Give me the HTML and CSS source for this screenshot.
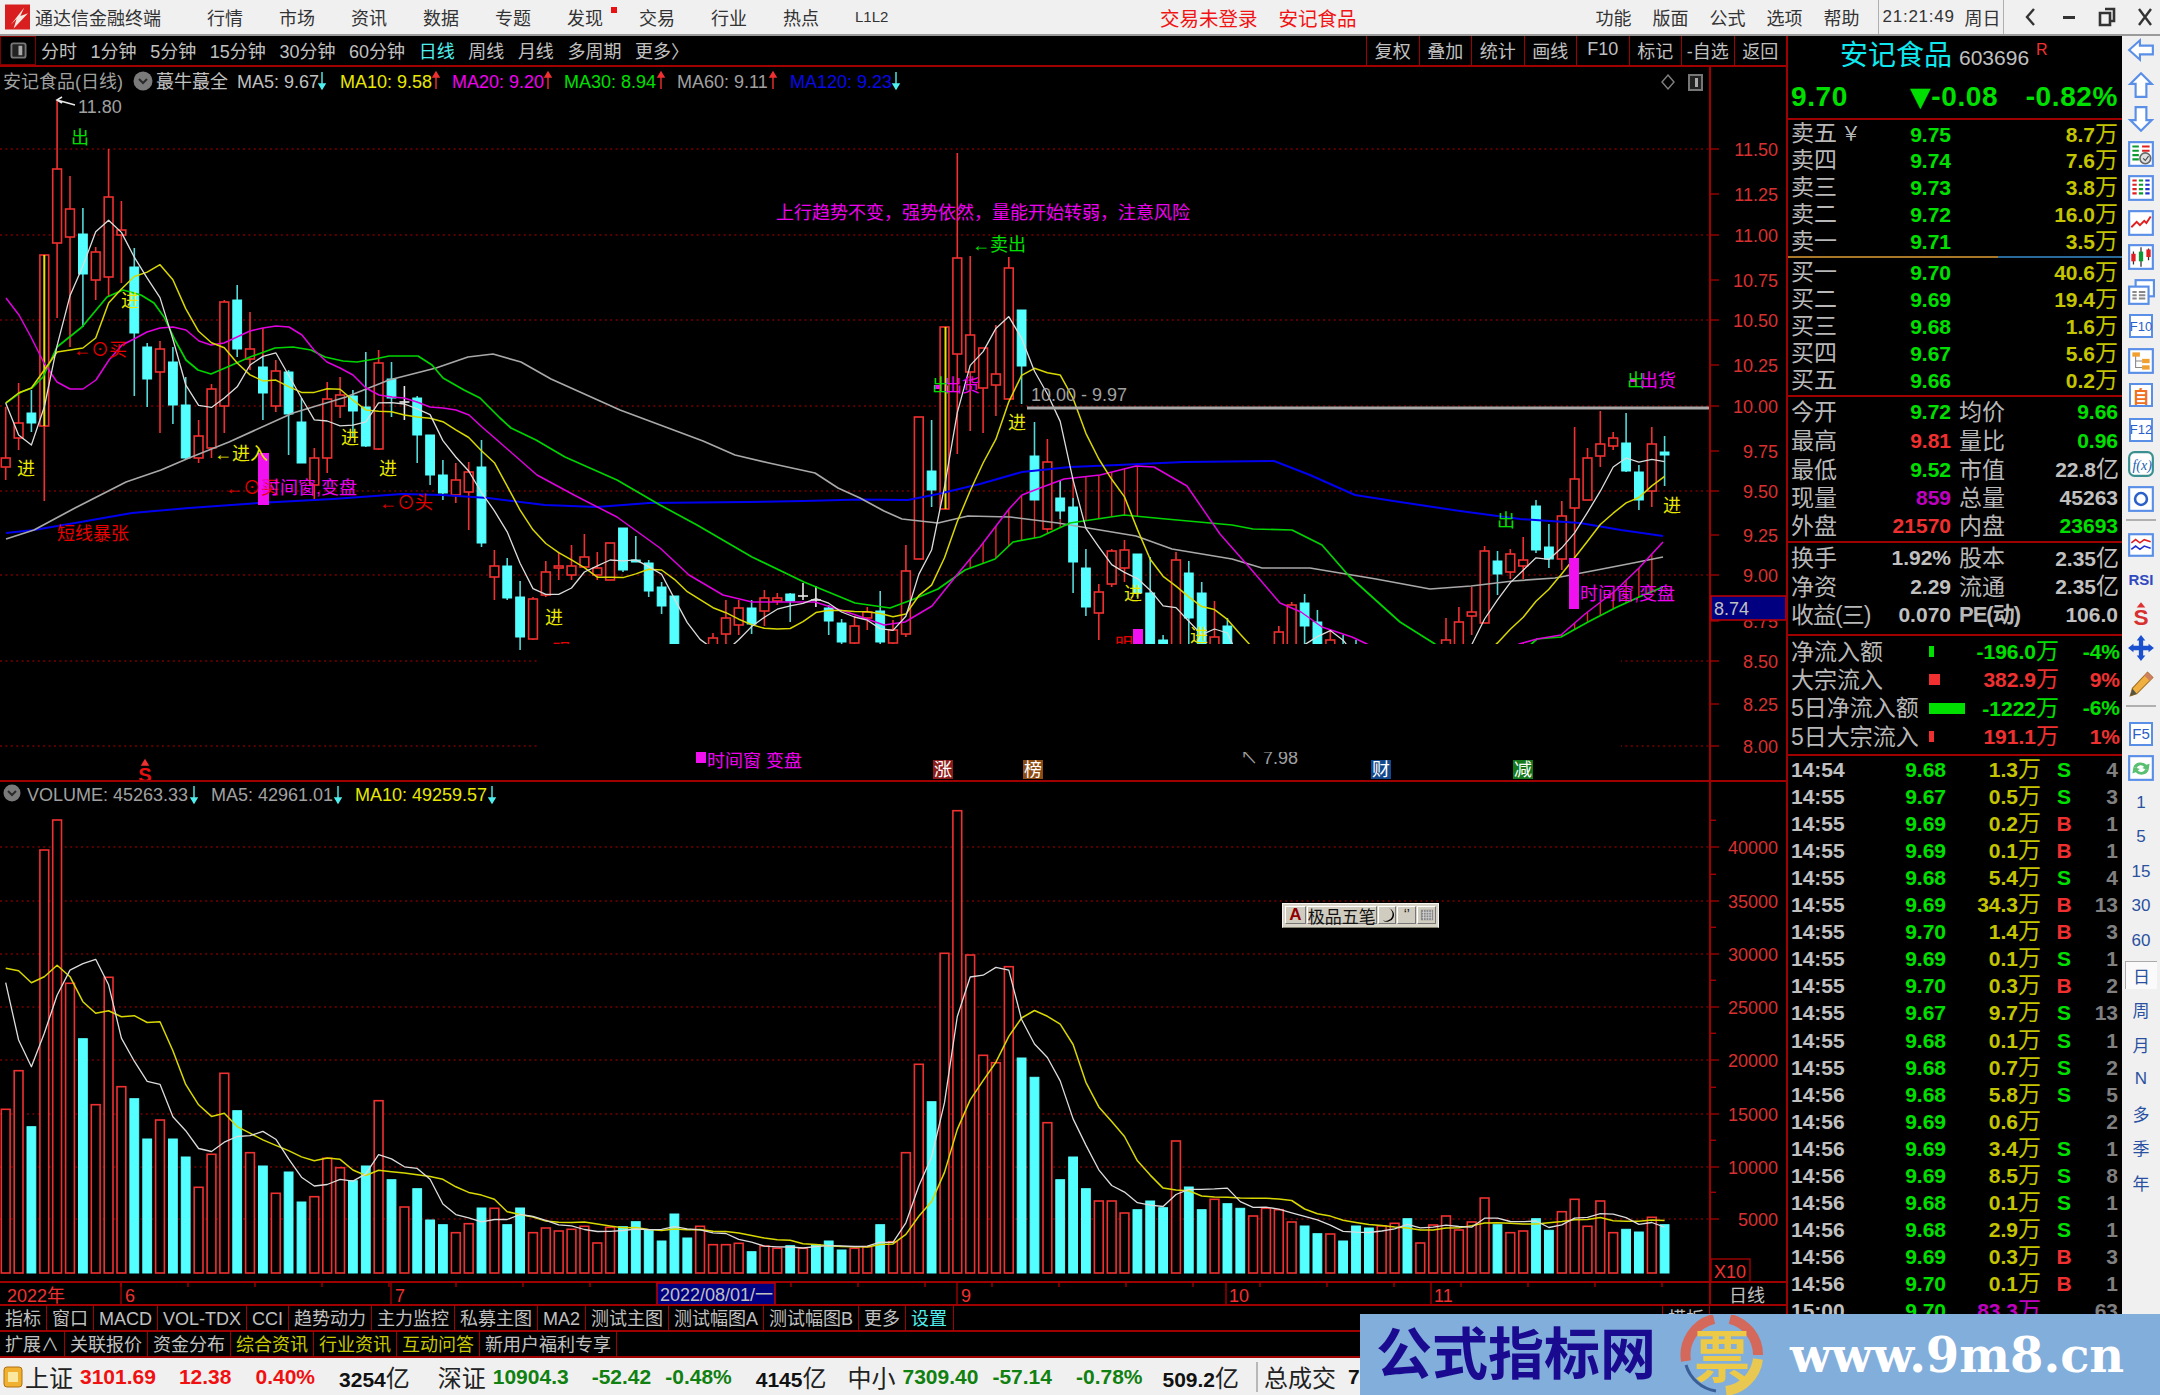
FILE: index.html
```html
<!DOCTYPE html>
<html lang="zh-CN">
<head>
<meta charset="utf-8">
<title>通达信金融终端</title>
<link rel="stylesheet" href="styles.css">
</head>
<body>
<div class="app">
  <header class="titlebar">
    <svg class="logo" viewBox="0 0 26 26"><rect width="26" height="26" fill="#d81e1e"/><path d="M6 21 L20 3 L16 12 L24 9 L9 25 L12 15 Z" fill="#f4e8e0"/></svg>
    <span class="brand">通达信金融终端</span>
    <nav class="mainmenu">
      <span>行情</span><span>市场</span><span>资讯</span><span>数据</span><span>专题</span><span class="flagged">发现</span><span>交易</span><span>行业</span><span>热点</span><span class="l1l2">L1L2</span>
    </nav>
    <div class="notice"><span>交易未登录</span><span>安记食品</span></div>
    <nav class="submenu"><span>功能</span><span>版面</span><span>公式</span><span>选项</span><span>帮助</span></nav>
    <div class="clock"><span class="time">21:21:49</span><span class="day">周日</span></div>
    <div class="winctl">
      <svg viewBox="0 0 18 22"><path d="M12 3 L5 11 L12 19" fill="none" stroke="#333" stroke-width="2.4"/></svg>
      <svg viewBox="0 0 18 22"><rect x="3" y="10" width="12" height="3" fill="#333"/></svg>
      <svg viewBox="0 0 18 22"><path d="M7 3 H16 V15 H13 M2 7 H12 V19 H2 Z" fill="none" stroke="#333" stroke-width="2.6"/></svg>
      <svg viewBox="0 0 18 22"><path d="M3 3 L15 19 M15 3 L3 19" fill="none" stroke="#333" stroke-width="2.4"/></svg>
    </div>
  </header>

  <main class="workspace">
    <section class="market">
      <nav class="periodbar">
        <span class="panelbtn"><svg viewBox="0 0 18 18"><rect x="1.5" y="1.5" width="15" height="15" rx="2" fill="#222" stroke="#777" stroke-width="2"/><rect x="9" y="4" width="4" height="10" fill="#aaa"/></svg></span>
        <div class="periods">
          <span>分时</span><span>1分钟</span><span>5分钟</span><span>15分钟</span><span>30分钟</span><span>60分钟</span><span class="active">日线</span><span>周线</span><span>月线</span><span>多周期</span><span>更多〉</span>
        </div>
        <div class="tools"><span>复权</span><span>叠加</span><span>统计</span><span>画线</span><span>F10</span><span>标记</span><span>-自选</span><span>返回</span></div>
      </nav>
      <div class="chart" id="chart"></div>
      <div class="tabs tabs-first">
        <span>指标</span><span>窗口</span><span>MACD</span><span>VOL-TDX</span><span>CCI</span><span>趋势动力</span><span>主力监控</span><span>私募主图</span><span>MA2</span><span>测试主图</span><span>测试幅图A</span><span>测试幅图B</span><span>更多</span><span class="cyan">设置</span><span class="tab-end">模板</span><span class="tab-blank"></span>
      </div>
      <div class="tabs">
        <span>扩展∧</span><span>关联报价</span><span>资金分布</span><span class="olive">综合资讯</span><span class="olive">行业资讯</span><span class="olive">互动问答</span><span>新用户福利专享</span>
      </div>
    </section>

    <aside class="quote">
      <div class="quote-head">
        <div class="stock"><span class="stock-name">安记食品</span><span class="stock-code">603696</span><sup class="stock-flag">R</sup></div>
        <div class="stock-price"><span>9.70</span><span class="stock-change"><i>▼</i>-0.08</span><span class="stock-pct">-0.82%</span></div>
      </div>
      <div class="book">
        <div class="brow"><span class="lb">卖五<em>￥</em></span><span class="gr">9.75</span><span class="yl">8.7<b>万</b></span></div>
        <div class="brow"><span class="lb">卖四</span><span class="gr">9.74</span><span class="yl">7.6<b>万</b></span></div>
        <div class="brow"><span class="lb">卖三</span><span class="gr">9.73</span><span class="yl">3.8<b>万</b></span></div>
        <div class="brow"><span class="lb">卖二</span><span class="gr">9.72</span><span class="yl">16.0<b>万</b></span></div>
        <div class="brow"><span class="lb">卖一</span><span class="gr">9.71</span><span class="yl">3.5<b>万</b></span></div>
      </div>
      <div class="split"><i></i><i></i></div>
      <div class="book book-buy">
        <div class="brow"><span class="lb">买一</span><span class="gr">9.70</span><span class="yl">40.6<b>万</b></span></div>
        <div class="brow"><span class="lb">买二</span><span class="gr">9.69</span><span class="yl">19.4<b>万</b></span></div>
        <div class="brow"><span class="lb">买三</span><span class="gr">9.68</span><span class="yl">1.6<b>万</b></span></div>
        <div class="brow"><span class="lb">买四</span><span class="gr">9.67</span><span class="yl">5.6<b>万</b></span></div>
        <div class="brow"><span class="lb">买五</span><span class="gr">9.66</span><span class="yl">0.2<b>万</b></span></div>
      </div>
      <div class="info">
        <div class="irow"><span class="lb">今开</span><span class="gr">9.72</span><span class="lb">均价</span><span class="gr">9.66</span></div>
        <div class="irow"><span class="lb">最高</span><span class="rd">9.81</span><span class="lb">量比</span><span class="gr">0.96</span></div>
        <div class="irow"><span class="lb">最低</span><span class="gr">9.52</span><span class="lb">市值</span><span class="gy">22.8<b>亿</b></span></div>
        <div class="irow"><span class="lb">现量</span><span class="mg">859</span><span class="lb">总量</span><span class="gy">45263</span></div>
        <div class="irow"><span class="lb">外盘</span><span class="rd">21570</span><span class="lb">内盘</span><span class="gr">23693</span></div>
      </div>
      <div class="info info-fund">
        <div class="irow"><span class="lb">换手</span><span class="gy">1.92%</span><span class="lb">股本</span><span class="gy">2.35<b>亿</b></span></div>
        <div class="irow"><span class="lb">净资</span><span class="gy">2.29</span><span class="lb">流通</span><span class="gy">2.35<b>亿</b></span></div>
        <div class="irow"><span class="lb nowrap">收益(三)</span><span class="gy">0.070</span><span class="lb nowrap pe">PE(动)</span><span class="gy">106.0</span></div>
      </div>
      <div class="flow">
        <div class="frow"><span class="lb">净流入额</span><span class="fbar"><i class="bar-g bar-1"></i></span><span class="gr">-196.0<b>万</b></span><span class="gr">-4%</span></div>
        <div class="frow"><span class="lb">大宗流入</span><span class="fbar"><i class="bar-r bar-2"></i></span><span class="rd">382.9<b>万</b></span><span class="rd">9%</span></div>
        <div class="frow"><span class="lb">5日净流入额</span><span class="fbar"><i class="bar-g bar-3"></i></span><span class="gr">-1222<b>万</b></span><span class="gr">-6%</span></div>
        <div class="frow"><span class="lb">5日大宗流入</span><span class="fbar"><i class="bar-r bar-1"></i></span><span class="rd">191.1<b>万</b></span><span class="rd">1%</span></div>
      </div>
      <div class="trades">
        <div class="trow"><span class="gy">14:54</span><span class="gr">9.68</span><span class="yl">1.3<b>万</b></span><span class="gr">S</span><span class="dim">4</span></div>
        <div class="trow"><span class="gy">14:55</span><span class="gr">9.67</span><span class="yl">0.5<b>万</b></span><span class="gr">S</span><span class="dim">3</span></div>
        <div class="trow"><span class="gy">14:55</span><span class="gr">9.69</span><span class="yl">0.2<b>万</b></span><span class="rd">B</span><span class="dim">1</span></div>
        <div class="trow"><span class="gy">14:55</span><span class="gr">9.69</span><span class="yl">0.1<b>万</b></span><span class="rd">B</span><span class="dim">1</span></div>
        <div class="trow"><span class="gy">14:55</span><span class="gr">9.68</span><span class="yl">5.4<b>万</b></span><span class="gr">S</span><span class="dim">4</span></div>
        <div class="trow"><span class="gy">14:55</span><span class="gr">9.69</span><span class="yl">34.3<b>万</b></span><span class="rd">B</span><span class="dim">13</span></div>
        <div class="trow"><span class="gy">14:55</span><span class="gr">9.70</span><span class="yl">1.4<b>万</b></span><span class="rd">B</span><span class="dim">3</span></div>
        <div class="trow"><span class="gy">14:55</span><span class="gr">9.69</span><span class="yl">0.1<b>万</b></span><span class="gr">S</span><span class="dim">1</span></div>
        <div class="trow"><span class="gy">14:55</span><span class="gr">9.70</span><span class="yl">0.3<b>万</b></span><span class="rd">B</span><span class="dim">2</span></div>
        <div class="trow"><span class="gy">14:55</span><span class="gr">9.67</span><span class="yl">9.7<b>万</b></span><span class="gr">S</span><span class="dim">13</span></div>
        <div class="trow"><span class="gy">14:55</span><span class="gr">9.68</span><span class="yl">0.1<b>万</b></span><span class="gr">S</span><span class="dim">1</span></div>
        <div class="trow"><span class="gy">14:55</span><span class="gr">9.68</span><span class="yl">0.7<b>万</b></span><span class="gr">S</span><span class="dim">2</span></div>
        <div class="trow"><span class="gy">14:56</span><span class="gr">9.68</span><span class="yl">5.8<b>万</b></span><span class="gr">S</span><span class="dim">5</span></div>
        <div class="trow"><span class="gy">14:56</span><span class="gr">9.69</span><span class="yl">0.6<b>万</b></span><span></span><span class="dim">2</span></div>
        <div class="trow"><span class="gy">14:56</span><span class="gr">9.69</span><span class="yl">3.4<b>万</b></span><span class="gr">S</span><span class="dim">1</span></div>
        <div class="trow"><span class="gy">14:56</span><span class="gr">9.69</span><span class="yl">8.5<b>万</b></span><span class="gr">S</span><span class="dim">8</span></div>
        <div class="trow"><span class="gy">14:56</span><span class="gr">9.68</span><span class="yl">0.1<b>万</b></span><span class="gr">S</span><span class="dim">1</span></div>
        <div class="trow"><span class="gy">14:56</span><span class="gr">9.68</span><span class="yl">2.9<b>万</b></span><span class="gr">S</span><span class="dim">1</span></div>
        <div class="trow"><span class="gy">14:56</span><span class="gr">9.69</span><span class="yl">0.3<b>万</b></span><span class="rd">B</span><span class="dim">3</span></div>
        <div class="trow"><span class="gy">14:56</span><span class="gr">9.70</span><span class="yl">0.1<b>万</b></span><span class="rd">B</span><span class="dim">1</span></div>
        <div class="trow"><span class="gy">15:00</span><span class="gr">9.70</span><span class="mg">83.3<b>万</b></span><span></span><span class="dim">63</span></div>
      </div>
    </aside>

    <aside class="sidebar">
      <svg class="ic" viewBox="0 0 26 26"><path d="M2 13 L12 4 V9 H24 V17 H12 V22Z" fill="#fff" stroke="#5a8fe8" stroke-width="2"/></svg>
      <svg class="ic" viewBox="0 0 26 26"><path d="M13 2 L23 12 H18 V24 H8 V12 H3Z" fill="#fff" stroke="#5a8fe8" stroke-width="2"/></svg>
      <svg class="ic" viewBox="0 0 26 26"><path d="M13 24 L23 14 H18 V2 H8 V14 H3Z" fill="#fff" stroke="#5a8fe8" stroke-width="2"/></svg>
      <svg class="ic" viewBox="0 0 26 26"><rect x="2" y="2" width="22" height="22" fill="#fff" stroke="#5a8fe8" stroke-width="2"/><path d="M5 6H11M5 10H11M5 14H11M5 18H11" stroke="#0a9a30" stroke-width="2"/><path d="M14 6H21M14 10H21" stroke="#e02020" stroke-width="2"/><circle cx="17" cy="17" r="5" fill="#ddd" stroke="#666" stroke-width="1.5"/><path d="M15 17l2 2 3-4" fill="none" stroke="#444"/></svg>
      <svg class="ic" viewBox="0 0 26 26"><rect x="2" y="2" width="22" height="22" fill="#fff" stroke="#5a8fe8" stroke-width="2"/><path d="M5 6H9M5 10H9M5 14H9M5 18H9" stroke="#e02020" stroke-width="2"/><path d="M11 6H15M11 10H15M11 14H15M11 18H15" stroke="#0a9a30" stroke-width="2"/><path d="M17 6H21M17 10H21M17 14H21M17 18H21" stroke="#2030d0" stroke-width="2"/></svg>
      <svg class="ic" viewBox="0 0 26 26"><rect x="2" y="2" width="22" height="22" fill="#fff" stroke="#5a8fe8" stroke-width="2"/><path d="M4 17 L9 12 L12 15 L16 11 L18 13 L22 7" fill="none" stroke="#e02020" stroke-width="1.8"/></svg>
      <svg class="ic" viewBox="0 0 26 26"><rect x="2" y="2" width="22" height="22" fill="#fff" stroke="#5a8fe8" stroke-width="2"/><path d="M6 8V20M13 4V22M20 5V16" stroke="#333" stroke-width="1.2"/><rect x="4" y="10" width="4" height="7" fill="#e02020"/><rect x="11" y="8" width="4" height="9" fill="#0a9a30"/><rect x="18" y="6" width="4" height="7" fill="#e02020"/></svg>
      <svg class="ic" viewBox="0 0 26 26"><rect x="8" y="2" width="17" height="15" fill="#fff" stroke="#5a8fe8" stroke-width="2"/><rect x="2" y="8" width="18" height="16" fill="#fff" stroke="#5a8fe8" stroke-width="2"/><path d="M5 13H9M11 13H17M5 16H9M11 16H17M5 19H9M11 19H17" stroke="#888" stroke-width="1.8"/></svg>
      <span class="ic boxed">F10</span>
      <svg class="ic" viewBox="0 0 26 26"><rect x="2" y="2" width="22" height="22" fill="#fff" stroke="#5a8fe8" stroke-width="2"/><path d="M8 8V19H14M8 13H14" fill="none" stroke="#888"/><rect x="5" y="5" width="7" height="4" fill="#f0a030"/><rect x="14" y="11" width="7" height="4" fill="#f0a030"/><rect x="14" y="17" width="7" height="4" fill="#f0a030"/></svg>
      <span class="ic boxed orange">自</span>
      <span class="ic boxed">F12</span>
      <svg class="ic" viewBox="0 0 26 26"><rect x="2" y="2" width="22" height="22" rx="5" fill="#fff" stroke="#3a9090" stroke-width="2"/><text x="5" y="19" class="ic-fx">f(x)</text></svg>
      <svg class="ic" viewBox="0 0 26 26"><rect x="2" y="2" width="22" height="22" fill="#fff" stroke="#5a8fe8" stroke-width="2"/><circle cx="13" cy="13" r="5.5" fill="none" stroke="#2a60c8" stroke-width="2.4"/></svg>
      <i class="sep sep-a"></i>
      <svg class="ic after-sep" viewBox="0 0 26 26"><rect x="2" y="3" width="22" height="20" fill="#fff" stroke="#5a8fe8" stroke-width="2"/><path d="M4 11 l4-3 4 3 4-3 6 2" fill="none" stroke="#e02020" stroke-width="1.5"/><path d="M4 17 l4-3 4 3 4-3 6 2" fill="none" stroke="#2030d0" stroke-width="1.5"/></svg>
      <span class="ic rsi">RSI</span>
      <svg class="ic" viewBox="0 0 26 26"><path d="M13 2 L17 7 H9Z" fill="#e03030"/><text x="6" y="23" class="ic-s">S</text></svg>
      <svg class="ic" viewBox="0 0 26 26"><path d="M13 1 L17 6 H15 V11 H20 V9 L25 13 L20 17 V15 H15 V20 H17 L13 25 L9 20 H11 V15 H6 V17 L1 13 L6 9 V11 H11 V6 H9Z" fill="#1a50d0"/></svg>
      <svg class="ic" viewBox="0 0 26 26"><path d="M19 3 L24 8 L9 23 L3 25 L5 18Z" fill="#f0b040" stroke="#a07020"/><path d="M19 3 L24 8 L21 11 L16 6Z" fill="#d08060"/><path d="M3 25 L5 18 L9 23Z" fill="#554"/></svg>
      <i class="sep sep-b"></i>
      <span class="ic boxed big after-sep-b">F5</span>
      <svg class="ic" viewBox="0 0 26 26"><rect x="2" y="2" width="22" height="22" fill="#fff" stroke="#5a8fe8" stroke-width="2"/><path d="M6 12 a7 6 0 0 1 12-2 l3-1 -1 6 -6-2 2-1 a4 4 0 0 0-7 1Z" fill="#58c070"/><path d="M20 15 a7 6 0 0 1-12 2 l-3 1 1-6 6 2 -2 1 a4 4 0 0 0 7-1Z" fill="#58c070"/></svg>
      <span class="ic num">1</span><span class="ic num">5</span><span class="ic num">15</span><span class="ic num">30</span><span class="ic num">60</span>
      <span class="ic num current">日</span><span class="ic num">周</span><span class="ic num">月</span><span class="ic num">N</span><span class="ic num">多</span><span class="ic num">季</span><span class="ic num">年</span>
    </aside>
  </main>

  <footer class="statusbar">
    <svg class="status-icon" viewBox="0 0 20 22"><rect x="1" y="1" width="18" height="20" rx="3" fill="#f0b030" stroke="#b07010"/><rect x="5" y="6" width="10" height="10" fill="#fbe8a0"/></svg>
    <div class="index"><span class="nm">上证</span><span class="up">3101.69</span><span class="up w2">12.38</span><span class="up">0.40%</span><span class="amt">3254<b>亿</b></span></div>
    <div class="index index-sz"><span class="nm">深证</span><span class="dn">10904.3</span><span class="dn w2">-52.42</span><span class="dn tight">-0.48%</span><span class="amt">4145<b>亿</b></span></div>
    <div class="index index-zx"><span class="nm">中小</span><span class="dn">7309.40</span><span class="dn tight">-57.14</span><span class="dn">-0.78%</span><span class="amt snug">509.2<b>亿</b></span></div>
    <div class="total"><span class="nm">总成交</span><span class="amt">7</span></div>
  </footer>

  <div class="ime">
    <span class="ime-a">A</span><span class="ime-name">极品五笔</span>
    <span class="ime-btn"><svg viewBox="0 0 16 20"><path d="M10 2 a8 8 0 1 1-7 14 a7 7 0 0 0 7-14Z" fill="#000"/></svg></span>
    <span class="ime-btn ime-dot">ʻʼ</span>
    <span class="ime-btn"><svg viewBox="0 0 16 20"><rect x="1" y="4" width="14" height="12" fill="#888"/><path d="M2 7H14M2 10H14M2 13H14M4 4V16M7 4V16M10 4V16M13 4V16" stroke="#ddd" stroke-width=".8"/></svg></span>
  </div>

  <div class="watermark">
    <span class="wm-cn">公式指标网</span>
    <svg class="wm-logo" viewBox="0 0 84 80">
      <path d="M6 46 A37 37 0 0 1 34 4" fill="none" stroke="#d4685a" stroke-width="10"/>
      <path d="M50 4 A37 37 0 0 1 78 40" fill="none" stroke="#d4685a" stroke-width="10"/>
      <path d="M78 44 A37 37 0 0 1 46 76" fill="none" stroke="#e8c850" stroke-width="10"/>
      <path d="M6 50 A37 37 0 0 0 36 76" fill="none" stroke="#3a5f98" stroke-width="3"/>
      <text x="42" y="62" class="wm-glyph">票</text>
    </svg>
    <span class="wm-url">www.9m8.cn</span>
  </div>
</div>
<script src="chart.js"></script>
</body>
</html>
```

FILE: styles.css
```css
* { box-sizing: border-box; }
html, body { margin: 0; padding: 0; background: #000; }
body { font-family: "Liberation Sans", "Noto Sans CJK SC", "DejaVu Sans", sans-serif; }
.app { position: relative; width: 2160px; height: 1395px; overflow: hidden; display: flex; flex-direction: column; background: #000; }

/* title bar */
.titlebar { height: 36px; flex: none; display: flex; align-items: center; background: #f0f0f0; border-bottom: 2px solid #9a9a9a; font-size: 18px; color: #333; white-space: nowrap; }
.logo { width: 25px; height: 26px; margin-left: 5px; flex: none; }
.brand { margin-left: 5px; width: 126px; }
.mainmenu { display: flex; gap: 36px; margin-left: 46px; }
.flagged { position: relative; }
.flagged::after { content: ""; position: absolute; left: 44px; top: 3px; width: 6px; height: 6px; background: #e81010; }
.l1l2 { width: 36px; font-size: 15px; line-height: 26px; }
.notice { display: flex; gap: 21px; margin-left: 269px; color: #f01414; font-size: 19.5px; }
.submenu { display: flex; gap: 21px; margin-left: 239px; }
.clock { display: flex; align-items: center; margin-left: 18px; height: 34px; width: 126px; padding-left: 4px; border-left: 1px solid #b0b0b0; border-right: 1px solid #b0b0b0; }
.time { width: 72px; font-size: 17px; letter-spacing: .75px; }
.day { margin-left: 10px; }
.winctl { display: flex; align-items: center; margin-left: 18px; gap: 20px; }
.winctl svg { width: 18px; height: 22px; }

.workspace { flex: 1; min-height: 0; display: flex; }

/* left column */
.market { width: 1788px; flex: none; display: flex; flex-direction: column; border-right: 2px solid #a00000; }
.periodbar { height: 31px; flex: none; display: flex; align-items: center; border-bottom: 2px solid #a00000; font-size: 18px; color: #c0c0c0; white-space: nowrap; }
.panelbtn { width: 36px; height: 29px; flex: none; display: flex; align-items: center; justify-content: center; border: 1px solid #800000; }
.panelbtn svg { width: 17px; height: 17px; }
.periods { display: flex; gap: 13.6px; margin-left: 5px; margin-top: -2px; }
.periods .active { color: #50f0f0; }
.tools { margin-left: auto; display: flex; height: 29px; align-items: stretch; }
.tools span { width: 52.5px; padding-bottom: 2px; border-left: 1px solid #a00000; display: flex; align-items: center; justify-content: center; }
.chart { flex: 1; min-height: 0; overflow: hidden; }
.chart svg { display: block; }
.tabs { height: 26px; flex: none; display: flex; border-bottom: 2px solid #a00000; font-size: 18px; color: #c0c0c0; white-space: nowrap; }
.tabs-first { height: 28px; border-top: 2px solid #a00000; }
.tabs span { padding: 0 5px; line-height: 27px; border-right: 1px solid #a00000; }
.tabs .cyan { color: #50f0f0; width: 48px; }
.tabs .olive { color: #c8c800; }
.tabs .tab-end { margin-left: auto; border-left: 1px solid #a00000; }
.tabs .tab-blank { width: 76px; padding: 0; border-right: 0; }

/* chart classes */
.grid { stroke: #b00000; stroke-width: 1.2; stroke-dasharray: 2 3.4; fill: none; }
.axis { stroke: #a00000; stroke-width: 2; fill: none; }
.tick { stroke: #a00000; stroke-width: 1.4; }
.c-up { fill: #000; stroke: #f03030; stroke-width: 1.6; }
.w-up { stroke: #f03030; stroke-width: 1.6; }
.c-dn { fill: #54ffff; stroke: #54ffff; stroke-width: 1; }
.w-dn { stroke: #54d8d8; stroke-width: 1.6; }
.w-fl { stroke: #e8e8e8; stroke-width: 1.6; }
.hatch { stroke: #e02828; stroke-width: 1.4; }
.line-y { stroke: #f0e000; stroke-width: 2; }
.ma { fill: none; stroke-linejoin: round; }
.ma5 { stroke: #dcdcdc; stroke-width: 1.3; }
.ma10 { stroke: #d8d800; stroke-width: 1.5; }
.ma20 { stroke: #e000e0; stroke-width: 1.5; }
.ma30 { stroke: #00d400; stroke-width: 1.7; }
.ma60 { stroke: #a8a8a8; stroke-width: 1.7; }
.ma120 { stroke: #0000f0; stroke-width: 2; }
.level { stroke: #a8a8a8; stroke-width: 3; }
.block { fill: #f010f0; }
.black { fill: #000; }
.t { font-size: 18px; font-family: "Liberation Sans", "Noto Sans CJK SC", "DejaVu Sans", sans-serif; fill: #c0c0c0; }
.t-red { fill: #f03030; }
.t-pure { fill: #e80000; }
.t-axis { fill: #d83030; text-anchor: end; }
.t-grey { fill: #a0a0a0; }
.t-yel { fill: #e8e800; }
.t-mag { fill: #f000f0; }
.t-grn { fill: #00e000; }
.t-blu { fill: #0808e8; }
.t-wht { fill: #fff; }
.t-end { text-anchor: middle; }
.t-s { font-size: 20px; font-weight: bold; fill: #e81010; text-anchor: middle; }
.b-zhang { fill: #8c1c1c; }
.b-bang { fill: #8c4c14; }
.b-cai { fill: #14488c; }
.b-jian { fill: #14781c; }
.navy { fill: #000080; stroke: #c00000; stroke-width: 1.5; }
.arrow-up { stroke: #f03030; fill: #f03030; stroke-width: 1.4; }
.arrow-dn { stroke: #50f0f0; fill: #50f0f0; stroke-width: 1.4; }
.dot-bg { fill: #7a7a7a; }
.dot-ch { fill: none; stroke: #2a2a2a; stroke-width: 2; }
.diamond { fill: none; stroke: #808080; stroke-width: 1.4; }
.pbtn { fill: #222; stroke: #777; stroke-width: 2; }
.pbtn-in { fill: #aaa; }

/* quote panel */
.quote { width: 334px; flex: none; background: #000; font-size: 21px; font-weight: bold; color: #c0c0c0; white-space: nowrap; overflow: hidden; }
.quote b { font-weight: 400; font-size: 23px; letter-spacing: -1px; }
.quote em { font-style: normal; font-weight: 400; font-size: 20px; margin-left: 4px; }
.quote-head { height: 84px; border-bottom: 2px solid #a00000; padding-top: 1px; }
.stock { height: 32px; display: flex; align-items: center; padding-left: 52px; }
.stock-name { font-size: 28px; font-weight: 400; color: #10e8f0; }
.stock-code { margin-left: 7px; margin-top: 10px; font-size: 21px; font-weight: 400; color: #c0c0c0; }
.stock-flag { font-size: 16px; font-weight: 400; color: #f03030; margin: -6px 0 0 7px; }
.stock-price { display: flex; padding: 0 4px 0 3px; margin-top: 11px; font-size: 28px; line-height: 34px; color: #00e000; letter-spacing: .6px; }
.stock-change { margin-left: 62px; }
.stock-change i { font-style: normal; font-size: 27px; line-height: 30px; font-family: "DejaVu Sans", sans-serif; }
.stock-pct { margin-left: auto; }
.gr { color: #00e000; }
.rd { color: #f03030; }
.yl { color: #c4c400; }
.mg { color: #c000c0; }
.gy { color: #c0c0c0; }
.dim { color: #808080; }
.lb { font-size: 23px; font-weight: 400; color: #b8b8b8; }
.nowrap { letter-spacing: -1px; }
.pe { font-size: 22px; font-weight: 700; }
.brow { height: 27px; display: grid; grid-template-columns: 60px 100px 1fr; padding: 0 5px 0 3px; align-items: center; line-height: 27px; text-align: right; }
.brow .lb, .irow .lb, .frow .lb { text-align: left; }
.split { display: flex; height: 2px; margin: 1px 0; }
.split i:first-child { width: 210px; background: #a87828; }
.split i:last-child { flex: 1; background: #2a6a9a; }
.book-buy { border-bottom: 2px solid #a00000; padding-bottom: 1px; }
.info { padding-top: 1px; border-bottom: 2px solid #a00000; }
.irow { height: 28.5px; display: grid; grid-template-columns: 60px 100px 68px 1fr; padding: 0 4px 0 3px; align-items: center; line-height: 28px; text-align: right; }
.irow .lb:nth-child(3) { margin-left: 8px; }
.info-fund { padding-bottom: 5px; }
.flow { padding-top: 1px; padding-bottom: 3px; border-bottom: 2px solid #a00000; }
.frow { height: 28.4px; display: grid; grid-template-columns: 138px 40px 89px 62px; padding-left: 3px; align-items: center; line-height: 28px; text-align: right; }
.fbar { display: flex; align-items: center; height: 100%; }
.bar-g, .bar-r { display: block; }
.bar-g { background: #00e000; }
.bar-r { background: #f03030; }
.bar-1 { width: 5px; height: 11px; }
.bar-2 { width: 11px; height: 11px; }
.bar-3 { width: 36px; height: 11px; }
.trades { height: 600px; overflow: hidden; }
.trow { height: 27.1px; display: grid; grid-template-columns: 55px 100px 94px 48px 30px; padding-left: 3px; align-items: center; line-height: 27px; text-align: right; }
.trow span:first-child { text-align: left; }
.trow span:nth-child(4) { text-align: center; }

/* sidebar */
.sidebar { flex: 1; min-width: 0; background: #f0f0f0; display: flex; flex-direction: column; align-items: center; gap: 6.5px; }
.ic { width: 28px; height: 28px; flex: none; display: flex; align-items: center; justify-content: center; }
.boxed { width: 24px; height: 24px; margin: 2px; background: #fff; border: 2px solid #5a8fe8; color: #2a60c8; font-size: 13px; }
.big { font-size: 15px; }
.orange { color: #f07020; font-size: 17px; font-weight: 700; }
.rsi { color: #3048c0; font-size: 15px; font-weight: 700; }
.num { color: #2a50a0; font-size: 17px; }
.current { width: 32px; margin: 0; border-top: 1px solid #aaa; border-left: 1px solid #aaa; background: #fafafa; }
.sep { display: block; width: 30px; height: 2px; flex: none; background: #b0b0b0; }
.sep-b { margin-top: 2px; }
.after-sep { margin-top: 3px; }
.boxed.after-sep-b { margin-top: 8px; }
.ic-fx { font-size: 13px; font-style: italic; fill: #1a60b0; font-family: "Liberation Serif", serif; }
.ic-s { font-size: 21px; font-weight: bold; fill: #d83030; font-family: "Liberation Sans", sans-serif; }

/* status bar */
.statusbar { height: 37px; flex: none; display: flex; align-items: center; background: #f0f0f0; font-size: 21px; font-weight: 700; color: #000; white-space: nowrap; }
.status-icon { width: 20px; height: 22px; margin-left: 3px; flex: none; }
.index { display: flex; align-items: center; margin-left: 2px; gap: 24px; margin-right: 2px; }
.index-sz { margin-left: 26px; }
.index-zx { margin-left: 19px; }
.nm { font-size: 24px; font-weight: 400; color: #222; margin-right: -17px; }
.up { color: #f01010; }
.dn { color: #108010; }
.w2 { margin-left: -1px; }
.tight { margin-left: -10px; }
.snug { margin-left: -4px; }
.amt { color: #111; }
.amt b { font-weight: 400; font-size: 24px; color: #222; }
.total { display: flex; align-items: center; margin-left: 15px; height: 30px; padding-left: 6px; border-left: 2px solid #b8b8b8; gap: 29px; }

/* overlays */
.ime { position: absolute; left: 1282px; top: 903px; width: 157px; height: 25px; background: #d8d4c8; border: 1px solid #f4f4f0; border-bottom-color: #808070; display: flex; align-items: stretch; padding: 2px 2px 3px; gap: 1px; font-size: 17px; color: #111; }
.ime span { display: flex; align-items: center; justify-content: center; border: 1px solid #fff; border-right-color: #777; border-bottom-color: #777; background: #d0ccc0; }
.ime-a { width: 21px; color: #900000; font-weight: 700; }
.ime-name { width: 71px; }
.ime-btn { width: 19px; }
.ime-btn svg { width: 14px; height: 18px; }
.ime-dot { font-size: 14px; }

.watermark { position: absolute; left: 1360px; top: 1314px; width: 800px; height: 81px; background: #82aedc; display: flex; align-items: center; }
.wm-cn { margin-left: 16px; font-size: 56px; line-height: 81px; font-weight: 700; color: #1a0a90; white-space: nowrap; }
.wm-logo { width: 84px; height: 80px; margin-left: 24px; flex: none; }
.wm-glyph { font-size: 56px; font-weight: 700; fill: #ecca48; text-anchor: middle; font-family: "Noto Sans CJK SC", sans-serif; }
.wm-url { margin-left: 26px; font-family: "DejaVu Serif", serif; font-weight: 700; font-size: 48px; color: #fff; white-space: nowrap; }
```

FILE: chart.js
```javascript
(function () {
  var X = function (i) { return 5.7 + 12.86 * i; };
  var K = [
    ['r',407,458,467,480],['r',383,423,438,450],['c',390,413,423,432],['r',255,255,426,501],['r',100,169,243,318],
    ['r',176,209,237,347],['c',208,234,274,327],['r',247,252,280,300],['r',149,197,277,297],['r',201,230,235,283],
    ['c',248,267,333,396],['c',343,347,379,407],['r',341,349,372,433],['c',347,362,405,424],['c',377,405,458,459],
    ['r',420,436,458,463],['r',384,389,448,458],['r',300,302,406,433],['c',285,300,349,357],['r',312,349,359,370],
    ['c',357,367,393,420],['r',360,371,406,412],['c',370,372,414,455],['c',398,422,463,463],['r',448,458,485,500],
    ['r',382,399,458,473],['r',377,395,406,418],['c',390,396,411,437],['c',352,407,446,447],['r',350,363,449,450],
    ['c',362,379,398,417],['w',386,402,402,420],['c',396,398,435,463],['c',435,435,475,485],['c',460,475,493,500],
    ['r',463,480,495,503],['r',462,472,492,530],['c',440,467,543,547],['r',550,566,577,600],['c',558,566,598,600],
    ['c',581,597,637,650],['r',597,599,639,640],['r',561,572,595,597],['r',552,566,568,580],['r',545,566,575,580],
    ['r',534,557,567,567],['r',552,568,575,580],['r',543,543,580,580],['c',528,528,570,572],['c',536,560,561,562],
    ['c',560,563,591,597],['c',582,587,606,614],['c',596,596,665,665],['c',650,660,690,700],['r',645,645,680,690],
    ['r',633,638,660,670],['r',600,618,634,650],['r',600,608,625,635],['c',600,608,624,634],['r',590,598,611,626],
    ['r',593,598,601,605],['c',593,594,601,622],['w',583,596,596,600],['w',586,600,600,607],['c',605,608,621,635],
    ['c',619,623,642,645],['r',616,626,643,645],['r',607,612,618,630],['c',591,611,642,645],['r',620,630,643,645],
    ['r',545,571,634,637],['r',417,417,559,559],['c',420,471,490,507],['r',327,327,509,509],['r',153,258,354,454],
    ['r',256,335,372,431],['r',348,348,388,433],['r',325,374,385,416],['r',257,268,399,400],['c',310,310,366,404],
    ['c',422,456,500,500],['r',439,462,529,530],['c',481,498,511,519],['c',498,507,562,593],['c',549,568,607,616],
    ['r',584,592,613,640],['r',549,551,584,587],['r',540,550,568,582],['c',554,554,593,597],['c',557,593,665,670],
    ['c',635,640,670,680],['r',552,560,650,660],['c',561,573,618,644],['c',582,593,660,670],['r',601,637,650,660],
    ['c',618,626,690,700],['c',660,670,700,710],['r',670,690,710,720],['r',650,670,700,710],['r',626,632,660,670],
    ['r',602,605,660,670],['c',594,603,626,644],['c',610,622,650,660],['r',630,640,670,680],['c',635,650,680,690],
    ['c',640,660,690,700],['c',650,680,700,710],['r',660,690,710,720],['r',660,680,710,720],['c',660,680,710,720],
    ['r',660,680,720,730],['r',650,670,710,720],['r',618,640,680,700],['r',607,622,660,670],['r',587,612,616,635],
    ['r',546,551,623,623],['c',551,561,574,595],['r',549,554,572,579],['r',537,560,566,579],['c',500,506,550,553],
    ['c',524,547,559,568],['r',501,516,559,570],['r',427,479,508,559],['r',448,458,500,500],['r',411,444,456,467],
    ['r',432,438,446,450],['c',413,443,471,472],['c',465,472,500,510],['r',427,444,491,507],['c',436,452,455,486]
  ];
  var VC = 'rrcrrrcrrr' + 'ccrccrrrcr' + 'crccrrrccr' + 'crcccrrcrc' + 'crrrrrrrcc' + 'ccccrrrrcr' + 'rcrcccrrcr' + 'rrcrrrrrrc' + 'crcccrrrcc' + 'crccrccrrr' + 'rccrcccrrc' + 'rrrrrrcrrc' + 'crrrrrccrc';
  var VT = [928,812,980,150,60,550,716,914,532,860,896,1017,960,1017,1071,1162,1063,820,932,1058,
    1098,1180,1116,1206,1190,1075,1103,1142,1098,902,1139,1221,1166,1260,1274,1298,1271,1224,1225,1274,
    1224,1298,1284,1293,1288,1279,1329,1282,1280,1265,1290,1323,1242,1314,1279,1334,1334,1330,1355,1338,
    1345,1337,1345,1334,1323,1350,1345,1340,1274,1325,1058,793,905,460,32,465,766,788,500,774,
    832,968,1139,1071,1166,1203,1203,1239,1229,1203,1223,1023,1161,1229,1198,1211,1225,1248,1225,1229,
    1266,1278,1301,1302,1323,1278,1284,1278,1270,1256,1329,1275,1248,1290,1266,1194,1274,1298,1293,1256,
    1291,1235,1198,1279,1203,1298,1288,1296,1252,1274].map(function (z) { return 800 + z / 3; });

  var MA20 = [6,298,19,315,31,337,44,363,57,382,70,389,83,389,96,380,109,360,122,345,134,339,147,332,160,328,173,327,186,330,199,341,211,345,224,343,237,337,250,331,263,328,276,326,289,327,302,335,314,350,327,362,340,368,353,375,366,388,379,395,392,397,404,398,417,402,430,407,443,408,456,410,469,415,482,427,497,440,537,475,574,495,617,517,660,548,689,575,723,595,752,602,815,602,850,613,884,625,905,622,932,606,956,576,980,547,1009,509,1022,495,1040,488,1064,479,1100,475,1136,466,1154,467,1187,486,1220,534,1250,568,1280,603,1301,612,1322,627,1352,637,1367,644,1440,700,1519,644,1537,639,1561,635,1585,614,1615,591,1639,568,1663,542];
  var MA30 = [6,403,21,392,32,388,43,377,57,347,82,327,107,297,123,290,141,295,154,303,164,317,175,340,186,360,198,370,211,374,232,365,250,357,275,348,293,347,311,350,325,357,343,361,357,362,375,359,389,356,418,356,432,365,443,378,464,390,480,398,500,418,511,428,536,440,565,457,617,480,660,505,697,525,752,557,804,582,855,603,890,608,914,599,938,589,965,570,995,559,1013,542,1040,537,1070,523,1124,515,1166,519,1232,525,1253,529,1292,530,1322,545,1349,576,1370,595,1400,622,1435,644,1480,690,1537,639,1561,637,1588,622,1615,608,1639,597,1663,587];
  var MA60 = [6,539,34,530,75,508,126,482,161,470,189,458,229,442,293,413,346,397,389,380,436,368,468,357,493,354,521,362,551,379,620,410,703,441,735,455,769,463,815,473,838,488,860,498,884,511,902,519,938,523,968,516,1010,517,1058,523,1100,530,1136,536,1172,549,1232,559,1262,568,1310,568,1376,579,1430,589,1471,586,1513,581,1555,578,1597,570,1633,563,1663,557];
  var MA120 = [6,533,34,530,75,523,132,513,189,508,258,503,333,499,402,494,442,495,488,498,545,505,597,507,649,503,746,502,804,501,860,499.5,908,500,938,494,980,484,1022,472,1070,467,1118,465,1184,462,1274,461,1310,475,1355,495,1400,502,1460,511,1520,519,1580,523,1621,530,1663,536];

  var svg = [];
  function L(x1, y1, x2, y2, cls) { svg.push('<line x1="' + x1 + '" y1="' + y1 + '" x2="' + x2 + '" y2="' + y2 + '" class="' + cls + '"/>'); }
  function R(x, y, w, h, cls) { svg.push('<rect x="' + x + '" y="' + y + '" width="' + w + '" height="' + h + '" class="' + cls + '"/>'); }
  function T(x, yc, s, cls) { svg.push('<text x="' + x + '" y="' + (yc + 6.5) + '" class="t ' + (cls || '') + '">' + s + '</text>'); }
  function poly(pts, cls) { svg.push('<polyline class="ma ' + cls + '" points="' + pts.join(' ') + '"/>'); }
  function series(ys) { return ys.map(function (y, i) { return X(i).toFixed(1) + ',' + y.toFixed(1); }); }
  function flat(a) { var o = []; for (var i = 0; i < a.length; i += 2) o.push(a[i] + ',' + a[i + 1]); return o; }
  function at(a, x) {
    for (var i = 0; i + 2 < a.length; i += 2) {
      if (x >= a[i] && x <= a[i + 2]) return a[i + 1] + (a[i + 3] - a[i + 1]) * (x - a[i]) / (a[i + 2] - a[i]);
    }
    return null;
  }
  function rolling(v, n, head) {
    return v.map(function (_, i) {
      if (i < head.length) return head[i];
      var s = 0; for (var j = i - n + 1; j <= i; j++) s += v[j];
      return s / n;
    });
  }
  function arrow(x, y0, up) {
    var c = up ? 'arrow-up' : 'arrow-dn';
    L(x, y0, x, y0 + 17, c);
    svg.push(up
      ? '<path class="' + c + '" d="M' + (x - 3) + ' ' + (y0 + 5) + 'L' + x + ' ' + y0 + 'L' + (x + 3) + ' ' + (y0 + 5) + 'Z"/>'
      : '<path class="' + c + '" d="M' + (x - 3) + ' ' + (y0 + 12) + 'L' + x + ' ' + (y0 + 17) + 'L' + (x + 3) + ' ' + (y0 + 12) + 'Z"/>');
  }
  function chevronDot(cx, cy, r) {
    svg.push('<circle cx="' + cx + '" cy="' + cy + '" r="' + r + '" class="dot-bg"/>');
    svg.push('<path class="dot-ch" d="M' + (cx - 4) + ' ' + (cy - 2) + 'l4 4 4-4"/>');
  }
  function panelBtn(x, y) { R(x, y, 13, 15, 'pbtn'); R(x + 6, y + 3, 3, 9, 'pbtn-in'); }

  /* price grid */
  [149, 235, 320, 406, 491, 575, 661, 746].forEach(function (y) { L(0, y, 1710, y, 'grid'); });
  [847, 901, 954, 1007, 1060, 1114, 1167, 1219].forEach(function (y) { L(0, y, 1710, y, 'grid'); });

  /* hatch between MA20 and MA30 */
  for (var h = 73; h < 130; h++) {
    if (h > 88 && h < 116) continue;
    var a = at(MA20, X(h)), b = at(MA30, X(h));
    if (a !== null && b !== null && a < b) L(X(h).toFixed(1), a.toFixed(1), X(h).toFixed(1), b.toFixed(1), 'hatch');
  }

  /* candles */
  K.forEach(function (k, i) {
    var x = X(i), t = k[0], H = k[1], O = k[2], C = k[3], W = k[4];
    var wc = t === 'r' ? 'w-up' : t === 'c' ? 'w-dn' : 'w-fl';
    var xs = x.toFixed(1);
    L(xs, H, xs, O, wc);
    L(xs, C, xs, W, wc);
    if (t === 'w') { L((x - 5).toFixed(1), O, (x + 5).toFixed(1), O, wc); return; }
    R((x - 4.4).toFixed(1), O, 8.8, Math.max(C - O, 2), t === 'r' ? 'c-up' : 'c-dn');
  });
  L(X(20).toFixed(1), 328, X(20).toFixed(1), 357, 'w-up');
  L(X(3).toFixed(1), 255, X(3).toFixed(1), 426, 'line-y');
  L((X(73) + 1).toFixed(1), 327, (X(73) + 1).toFixed(1), 509, 'line-y');

  /* moving averages */
  var closes = K.map(function (k) { return k[0] === 'c' ? k[3] : k[2]; });
  poly(flat(MA120), 'ma120');
  poly(flat(MA60), 'ma60');
  poly(flat(MA30), 'ma30');
  poly(flat(MA20), 'ma20');
  poly(series(rolling(closes, 10, [403, 393, 388, 370, 352, 350, 348, 338, 303])), 'ma10');
  poly(series(rolling(closes, 5, [403, 435, 445, 407])), 'ma5');

  /* signal blocks */
  R(258, 453, 11, 52, 'block');
  R(1569, 558, 10, 51, 'block');
  R(1133, 629, 10, 20, 'block');
  R(696, 752, 10, 11, 'block');
  R(934, 385, 6, 4, 'block');
  R(1630, 378, 6, 4, 'block');

  /* annotations */
  T(71, 137, '出', 't-grn');
  T(17, 468, '进', 't-yel'); T(121, 300, '进', 't-yel'); T(341, 437, '进', 't-yel'); T(379, 468, '进', 't-yel');
  T(545, 617, '进', 't-yel'); T(1008, 422, '进', 't-yel'); T(1124, 593, '进', 't-yel'); T(1190, 635, '进', 't-yel');
  T(1663, 505, '进', 't-yel');
  T(73, 349, '←⊙买', 't-pure');
  T(225, 487, '←⊙买', 't-pure');
  T(262, 487, '时间窗,变盘', 't-mag');
  T(379, 502, '←⊙头', 't-pure');
  T(214, 453, '←进入', 't-yel');
  T(57, 533, '短线暴张', 't-pure');
  T(776, 212, '上行趋势不变，强势依然，量能开始转弱，注意风险', 't-mag');
  T(972, 244, '←卖出', 't-grn');
  T(932, 385, '出', 't-grn'); T(944, 385, '出货', 't-mag');
  T(1627, 380, '出', 't-grn'); T(1640, 380, '出货', 't-mag');
  T(1497, 520, '出', 't-grn');
  T(1580, 593, '时间窗,变盘', 't-mag');
  T(1031, 394, '10.00 - 9.97', 't-grey');
  L(1027, 408, 1710, 408, 'level');
  T(534, 650, '←明', 't-pure');
  T(1115, 644, '明', 't-pure');
  T(707, 760, '时间窗 变盘', 't-mag');
  T(1240, 757, '↖ 7.98', 't-grey');

  /* peak label */
  svg.push('<path class="w-fl" fill="none" d="M62 97L57 100L62 103M57 100L75 105"/>');
  T(78, 106, '11.80', 't-grey');

  /* region blacked out in the capture */
  R(540, 644, 1081, 108, 'black');
  R(537, 652, 4, 100, 'black');

  /* markers under price chart */
  svg.push('<path class="arrow-up" d="M142 765L145 760L148 765Z"/>');
  svg.push('<text x="145" y="782" class="t-s">S</text>');
  [[933, '涨', 'b-zhang'], [1023, '榜', 'b-bang'], [1371, '财', 'b-cai'], [1513, '减', 'b-jian']].forEach(function (b) {
    R(b[0], 760, 20, 19, b[2]);
    T(b[0] + 1, 769, b[1], 't-wht');
  });

  /* legend */
  T(3, 81, '安记食品(日线)', 't-grey');
  chevronDot(143, 81, 9.5);
  T(156, 81, '蕞牛蕞全');
  T(237, 81, 'MA5: 9.67'); arrow(322, 72, false);
  T(340, 81, 'MA10: 9.58', 't-yel'); arrow(436, 72, true);
  T(452, 81, 'MA20: 9.20', 't-mag'); arrow(548, 72, true);
  T(564, 81, 'MA30: 8.94', 't-grn'); arrow(661, 72, true);
  T(677, 81, 'MA60: 9.11', 't-grey'); arrow(773, 72, true);
  T(790, 81, 'MA120: 9.23', 't-blu'); arrow(896, 72, false);
  svg.push('<path class="diamond" d="M1668 75l6 7-6 7-6-7Z"/>');
  panelBtn(1689, 75);

  /* volume */
  VT.forEach(function (y, i) {
    var x = X(i);
    R((x - 4.4).toFixed(1), y.toFixed(1), 8.8, (1273 - y).toFixed(1), VC[i] === 'r' ? 'c-up' : 'c-dn');
  });
  var white = [548, 720, 800, 700].map(function (z) { return 800 + z / 3; });
  var yel = [505, 512, 548, 530, 496, 530, 605, 640, 632].map(function (z) { return 800 + z / 3; });
  poly(series(rolling(VT, 10, yel)), 'ma10');
  poly(series(rolling(VT, 5, white)), 'ma5');
  chevronDot(12, 793, 8.5);
  T(27, 794, 'VOLUME: 45263.33', 't-grey'); arrow(194, 786, false);
  T(211, 794, 'MA5: 42961.01', 't-grey'); arrow(338, 786, false);
  T(355, 794, 'MA10: 49259.57', 't-yel'); arrow(492, 786, false);

  /* axes */
  L(1710, 67, 1710, 1306, 'axis');
  L(0, 781, 1786, 781, 'axis');
  L(0, 1282, 1786, 1282, 'axis');
  [['11.50', 149], ['11.25', 194], ['11.00', 235], ['10.75', 280], ['10.50', 320], ['10.25', 365], ['10.00', 406], ['9.75', 451], ['9.50', 491], ['9.25', 535], ['9.00', 575], ['8.75', 621], ['8.50', 661], ['8.25', 704], ['8.00', 746]].forEach(function (p) {
    L(1711, p[1], 1719, p[1], 'tick');
    T(1778, p[1], p[0], 't-axis');
  });
  [['40000', 847], ['35000', 901], ['30000', 954], ['25000', 1007], ['20000', 1060], ['15000', 1114], ['10000', 1167], ['5000', 1219]].forEach(function (p) {
    L(1711, p[1], 1719, p[1], 'tick');
    L(1711, p[1] - 26.7, 1716, p[1] - 26.7, 'tick');
    T(1778, p[1], p[0], 't-axis');
  });
  R(1711, 596, 75, 24, 'navy');
  T(1714, 608, '8.74');
  svg.push('<rect x="1711" y="1259" width="39" height="23" fill="none" class="tick"/>');
  T(1714, 1271, 'X10', 't-red');

  /* date axis */
  for (var d = 121; d < 1700; d += 67) L(d, 1283, d, 1287, 'tick');
  [121, 391, 957, 1226, 1431].forEach(function (x) { L(x, 1283, x, 1306, 'tick'); });
  T(7, 1295, '2022年', 't-red');
  T(125, 1295, '6', 't-red'); T(395, 1295, '7', 't-red'); T(961, 1295, '9', 't-red');
  T(1229, 1295, '10', 't-red'); T(1434, 1295, '11', 't-red');
  R(657, 1283, 118, 22, 'navy');
  T(660, 1294, '2022/08/01/一');
  T(1729, 1295, '日线');

  document.getElementById('chart').innerHTML =
    '<svg xmlns="http://www.w3.org/2000/svg" width="1786" height="1239" viewBox="0 67 1786 1239">' + svg.join('') + '</svg>';
})();
```
